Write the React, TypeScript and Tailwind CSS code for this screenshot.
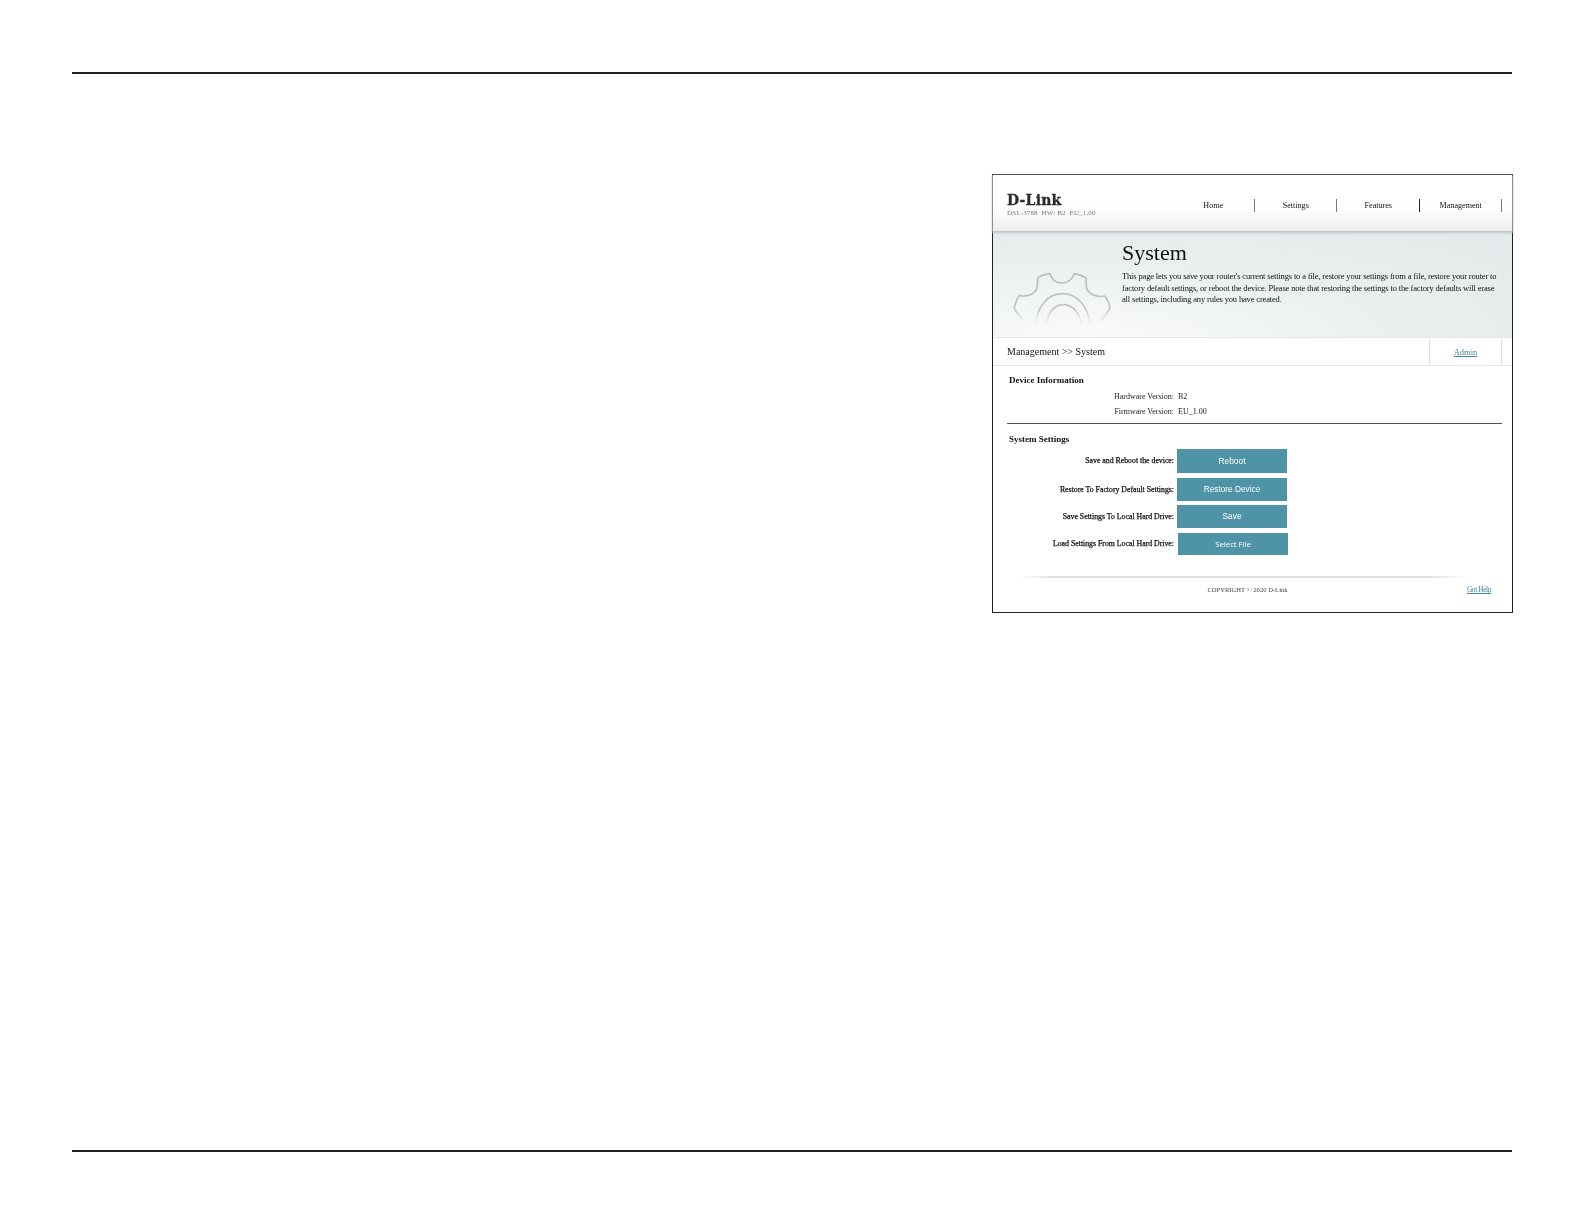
import React from "react";

const navItems = ["Home", "Settings", "Features", "Management"];

const settingRows = [
  { label: "Save and Reboot the device:", button: "Reboot", rowClass: "h-[24px] mb-[5px]", btnClass: "ml-[3px] text-[8.4px] font-['Liberation_Sans',sans-serif]" },
  { label: "Restore To Factory Default Settings:", button: "Restore Device", rowClass: "h-[23px] mb-[4px]", btnClass: "ml-[3px] text-[8.3px] font-['Liberation_Sans',sans-serif]" },
  { label: "Save Settings To Local Hard Drive:", button: "Save", rowClass: "h-[23px] mb-[5px]", btnClass: "ml-[3px] text-[8.4px] font-['Liberation_Sans',sans-serif]" },
  { label: "Load Settings From Local Hard Drive:", button: "Select File", rowClass: "h-[22px]", btnClass: "ml-[4px] pb-[1px] text-[8px] tracking-[-0.1px] font-['Open_Sans',sans-serif]" },
];

const Gear = () => (
  <svg width="115" height="76" viewBox="0 0 345 228" fill="none" className="ml-[12px] shrink-0 self-end">
    <defs>
      <linearGradient id="gearFade" x1="0" y1="30" x2="0" y2="195" gradientUnits="userSpaceOnUse">
        <stop offset="0" stopColor="#b8bcbc" />
        <stop offset="0.7" stopColor="#c0c4c4" />
        <stop offset="1" stopColor="#e8eeee" stopOpacity="0.2" />
      </linearGradient>
    </defs>
    <path
      d="M55 178 C45 165 33 155 28 141 C30 128 36 115 42 103 C60 108 82 104 94 87 C99 75 96 60 100 48 C112 43 123 40 135 38 C140 55 153 66 170 66 C187 66 202 55 208 38 C220 40 232 44 243 50 C245 63 241 77 247 88 C258 104 282 109 300 105 C307 116 313 128 315 141 C308 155 298 166 289 178"
      stroke="url(#gearFade)"
      strokeWidth="5"
      strokeLinecap="round"
      strokeLinejoin="round"
    />
    <path d="M92 192 C96 135 130 98 172 98 C216 98 250 135 255 192" stroke="url(#gearFade)" strokeWidth="5" />
    <path d="M124 192 C128 155 148 131 175 131 C203 131 224 155 229 192" stroke="url(#gearFade)" strokeWidth="5" />
  </svg>
);

export default function App() {
  return (
    <div className="flex h-[1224px] w-[1584px] flex-col bg-white px-[72px] pt-[72px] font-['Liberation_Serif',serif] text-black">
      <div className="h-[2px] w-full shrink-0 bg-[#231f20]" />

      <div className="mt-[100px] mr-[-1px] ml-auto h-[439px] w-[521px] shrink-0 border border-[#231f20] bg-white">
        <div className="h-full blur-[0.3px]">
          {/* top bar */}
          <div className="relative flex h-[56px] items-start justify-between bg-gradient-to-b from-white from-55% to-[#eceeee] pr-[10px] pl-[14px] shadow-[0_1px_2px_1px_#c0c4c4]">
            <div className="pt-[17px]">
              <div className="h-[17px] font-['DejaVu_Serif',serif] text-[14px] leading-[17px] font-bold tracking-[0.2px] text-[#2b2b2b] [-webkit-text-stroke:0.3px_#2b2b2b]">D-Link</div>
              <div className="text-[7px] leading-[9px] tracking-[0.15px] text-[#777]">DSL-3788&nbsp; HW: B2&nbsp; EU_1.00</div>
            </div>
            <div className="mt-[24px] flex">
              {navItems.map((item, i) => (
                <div
                  key={item}
                  className={`flex h-[13px] w-[82.5px] items-center justify-center border-r pt-[1px] pl-[1px] text-[8.1px] text-[#111] ${i === 2 ? "border-[#222]" : "border-[#777]"}`}
                >
                  {item}
                </div>
              ))}
            </div>
          </div>

          {/* banner */}
          <div className="mt-px flex h-[105px] bg-[radial-gradient(ellipse_at_18%_100%,#fafbfb_0%,#f2f5f5_25%,#e9eeee_55%,#e3e9ea_100%)]">
            <Gear />
            <div className="ml-[2px] pt-[7px]">
              <h1 className="text-[22px] leading-[28px] font-normal text-[#111]">System</h1>
              <p className="mt-[4px] text-[8.5px] leading-[11.5px] tracking-[-0.16px] whitespace-nowrap text-[#111]">
                This page lets you save your router's current settings to a file, restore your settings from a file, restore your router to
                <br />
                factory default settings, or reboot the device. Please note that restoring the settings to the factory defaults will erase
                <br />
                all settings, including any rules you have created.
              </p>
            </div>
          </div>

          {/* breadcrumb */}
          <div className="flex h-[29px] items-stretch justify-between border-y border-[#e6e8e8] pr-[10px] pl-[14px]">
            <div className="flex items-center text-[10px] text-[#111]">Management &gt;&gt; System</div>
            <div className="flex w-[73px] items-center justify-center border-x border-[#dcdfdf] pt-[1px] text-[8.5px] text-[#3f8a9c] underline">Admin</div>
          </div>

          {/* device info */}
          <div className="pt-[8px] pr-[10px] pl-[14px]">
            <h2 className="pl-[2px] text-[9px] leading-[12px] font-bold text-[#111]">Device Information</h2>
            <div className="mt-[3px] flex h-[15px] items-center text-[8px] text-[#222]">
              <span className="w-[167px] text-right">Hardware Version:</span>
              <span className="ml-[4px]">B2</span>
            </div>
            <div className="flex h-[15px] items-center text-[8px] text-[#222]">
              <span className="w-[167px] text-right">Firmware Version:</span>
              <span className="ml-[4px]">EU_1.00</span>
            </div>
            <div className="mt-[4px] h-px bg-[#555]" />

            {/* system settings */}
            <h2 className="mt-[9px] pl-[2px] text-[9px] leading-[12px] font-bold text-[#111]">System Settings</h2>
            <div className="mt-[4px]">
              {settingRows.map((row) => (
                <div key={row.label} className={`flex items-center ${row.rowClass}`}>
                  <span className="w-[167px] text-right text-[7.8px] font-medium text-[#111] [-webkit-text-stroke:0.25px_#111]">{row.label}</span>
                  <button className={`flex h-full w-[110px] items-center justify-center bg-[#4f93a7] text-white ${row.btnClass}`}>{row.button}</button>
                </div>
              ))}
            </div>
          </div>

          {/* footer */}
          <div className="mt-[21px] ml-[24px] h-[2px] w-[456px] bg-[linear-gradient(90deg,#ffffff_0%,#dfe2e2_8%,#dfe2e2_90%,#ffffff_100%)]" />
          <div className="relative mt-[7px] flex h-[10px] items-center justify-center pr-[10px] text-[6.6px] text-[#444]">
            <span>COPYRIGHT © 2020 D-Link</span>
            <span className="absolute right-[21px] text-[7.5px] tracking-[-0.45px] text-[#3f8a9c] underline">Got Help</span>
          </div>
        </div>
      </div>

      <div className="mt-auto mb-[72px] h-[2px] w-full shrink-0 bg-[#231f20]" />
    </div>
  );
}
